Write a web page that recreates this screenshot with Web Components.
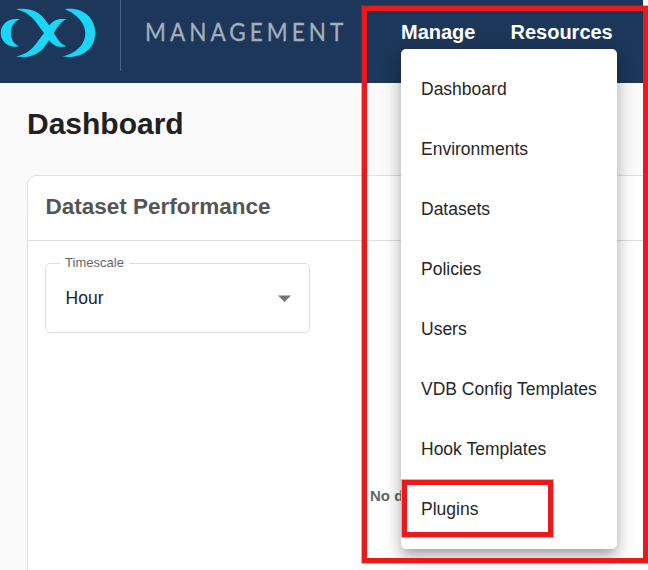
<!DOCTYPE html>
<html lang="en"><head><meta charset="utf-8"><title>Dashboard</title>
<style>html,body{margin:0;height:100%;overflow:hidden;background:#fff}body{font-family:"Liberation Sans",Arial,sans-serif;color:#212121}</style></head>
<body><management-app></management-app>
<script>
const define = (name, html) => {
  const t = document.createElement('template');
  t.innerHTML = html;
  customElements.define(name, class extends HTMLElement {
    constructor() { super(); this.attachShadow({mode: 'open'}).append(t.content.cloneNode(true)); }
  });
};
define('brand-logo', `<style>:host{display:block;width:100px;height:66px}svg{display:block}</style>
<svg width="100" height="66" viewBox="0 0 100 66" fill="#1ad6f7">
<path d="M19.5 19.4C9 17.6 .8 24 .8 33S9 48.7 19.5 46.3C14 44.4 10.9 39.6 10.9 33S14 21.4 19.5 19.4Z"/>
<path d="M16 9.3C29 7.6 38 11 44.5 19L49 25.3C53.5 20.4 58 17.8 66.5 19.4C61.2 21.2 58.7 24.8 53.7 33C58.7 41.2 61.2 44.5 66.5 46.3C58 48 53.5 45.5 49 40.2L44.5 46.7C38 54.8 29 58.4 16 56.6C26.5 54.3 32 49.5 37.5 41.8L44 33L37.5 24.2C32 16.5 26.5 11.6 16 9.3Z"/>
<path d="M64.5 9.3C81.5 6.4 95.2 17 95.2 33S81.5 59.4 62.5 56.6C73.5 53.8 85.3 46.5 85.3 33C85.3 21.5 73.5 12.2 64.5 9.3Z"/></svg>`);
define('nav-link', `<style>:host{display:block;font:bold 20px/24px "Liberation Sans",Arial,sans-serif;color:#fff}</style><slot></slot>`);
define('top-bar', `<style>:host{display:flex;box-sizing:border-box;height:83px;background:#1d375a;align-items:flex-start}
.rule{width:1px;height:71px;background:#4a5f7b;margin-left:20px}
.product{font:400 25px/30px Lato,sans-serif;letter-spacing:4.5px;transform:scaleX(.9);transform-origin:0 0;color:#a5afbd;-webkit-text-stroke:.3px #a5afbd;margin:16px 0 0 23.5px;width:256.5px;white-space:nowrap}
nav{display:flex;gap:35px;padding-top:20px}</style>
<brand-logo></brand-logo><div class="rule"></div><div class="product">MANAGEMENT</div><nav><nav-link>Manage</nav-link><nav-link>Resources</nav-link></nav>`);
define('select-field', `<style>:host{display:block;width:265px}
fieldset{box-sizing:border-box;margin:0;min-width:0;height:78px;border:1px solid #dedede;border-radius:5px;padding:0 18px 0 19px}
legend{font-size:13px;line-height:15px;color:#666;padding:0 5px 2px;margin-left:-5px;letter-spacing:.03px}
.value{display:flex;align-items:center;justify-content:space-between;height:20px;margin-top:16px;padding-left:.4px;font-size:17.5px;letter-spacing:.1px;color:#212121}
svg{display:block}</style>
<fieldset><legend><slot name="label"></slot></legend><div class="value"><span><slot></slot></span><svg width="13" height="7"><path d="M0 .5h13L6.5 7z" fill="#757575"/></svg></div></fieldset>`);
define('data-card', `<style>:host{display:flex;flex-direction:column;box-sizing:border-box;height:420px;background:#fff;border:1px solid #dedede;border-right:0;border-radius:9px 0 0 0}
header{box-sizing:border-box;height:65px;padding:17px 17px 0 17.5px;border-bottom:1px solid #dedede;font:bold 22.5px/27px "Liberation Sans",Arial,sans-serif;color:#555}
.body{padding:14px 17px}</style>
<header><slot name="title"></slot></header><div class="body"><slot></slot></div>`);
define('empty-note', `<style>:host{display:block;padding:154px 0 0 325px;font:bold 15px/18px "Liberation Sans",Arial,sans-serif;color:#666}</style><slot></slot>`);
define('menu-item', `<style>:host{display:flex;align-items:center;height:60px;padding:0 20px;font-size:17.5px;line-height:20px;color:#262626;white-space:nowrap}</style><slot></slot>`);
define('drop-menu', `<style>:host{display:block;box-sizing:border-box;width:216px;height:500px;padding:10px 0;background:#fff;border-radius:5px;box-shadow:0 6px 8px -4px rgba(0,0,0,.2),0 10px 15px 1px rgba(0,0,0,.14),0 4px 18px 3px rgba(0,0,0,.12)}</style><slot></slot>`);
define('callout-box', `<style>:host{display:block;box-sizing:border-box;border:5px solid #e81a1c;outline:.5px solid rgba(232,26,28,.4)}</style>`);
define('management-app', `<style>
:host{display:block;position:relative;width:648px;height:570px;overflow:hidden;background:#fff}
.page{width:643px;height:570px;background:#fafafa;overflow:hidden}
h1{font:bold 30px/36px "Liberation Sans",Arial,sans-serif;color:#212121;margin:0;padding:23px 0 33px 27px}
data-card{margin-left:27px}
drop-menu{position:absolute;left:401px;top:49px}
.outer{position:absolute;left:362px;top:6px;width:286px;height:557px}
.inner{position:absolute;left:402px;top:480px;width:151px;height:57px}
</style>
<div class="page"><top-bar></top-bar><h1>Dashboard</h1>
<data-card><span slot="title">Dataset Performance</span><select-field><span slot="label">Timescale</span>Hour</select-field><empty-note>No data</empty-note></data-card></div>
<drop-menu><menu-item>Dashboard</menu-item><menu-item>Environments</menu-item><menu-item>Datasets</menu-item><menu-item>Policies</menu-item><menu-item>Users</menu-item><menu-item>VDB Config Templates</menu-item><menu-item>Hook Templates</menu-item><menu-item>Plugins</menu-item></drop-menu>
<callout-box class="outer"></callout-box><callout-box class="inner"></callout-box>`);
</script></body></html>
